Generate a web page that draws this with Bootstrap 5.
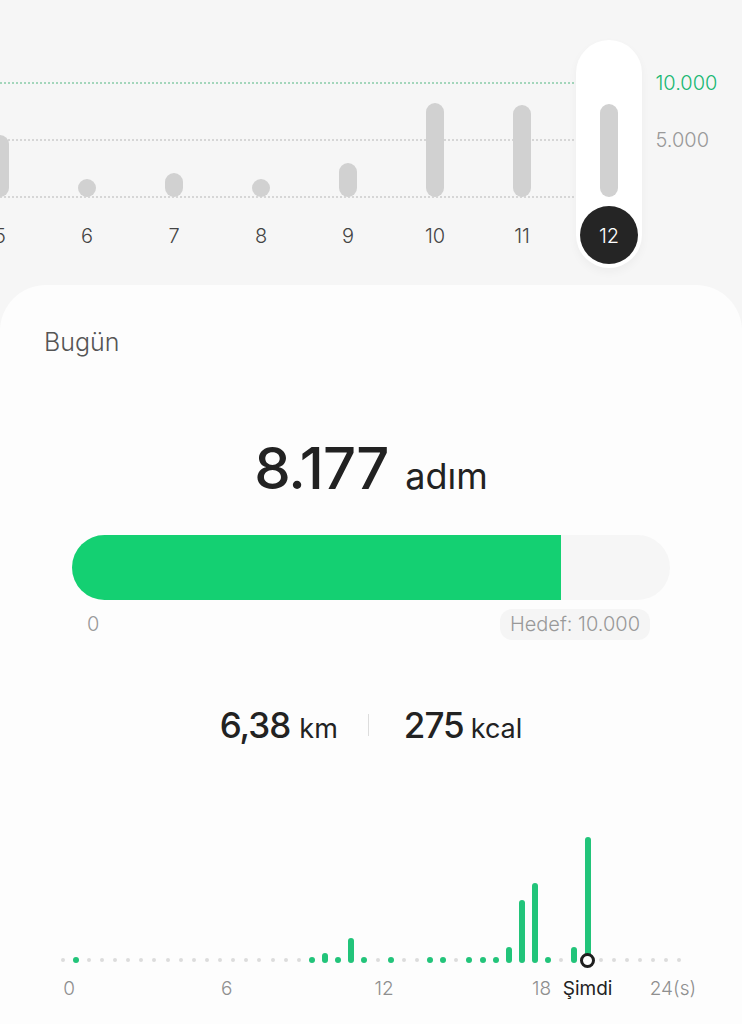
<!doctype html>
<html lang="tr">
  <head>
    <meta charset="utf-8">
    <meta name="viewport" content="width=device-width, initial-scale=1">
    <title>Adımlar</title>
    <link href="https://cdn.jsdelivr.net/npm/bootstrap@5.3.0/dist/css/bootstrap.min.css" rel="stylesheet">
    <style>
      body {
        background: #f6f6f6;
        font-family: "Inter", "Liberation Sans", sans-serif;
        color: #222;
        overflow: hidden;
      }
      .week-chart { height: 285px; padding-top: 40px; margin-left: -43.5px; }
      .week-plot { height: 228px; }
      .grid-line { position: absolute; left: 0; right: 20px; border-top: 2px dotted #d6d6d6; }
      .grid-line.goal { top: 42px; border-top-color: #a3d6bb; }
      .grid-line.mid { top: 99px; }
      .grid-line.base { top: 156px; }
      .day-col { width: 87px; height: 228px; position: relative; }
      .day-pill { width: 66px; height: 228px; border-radius: 33px; }
      .day-pill.active { background: #fff; box-shadow: 0 4px 10px rgba(0, 0, 0, .04); }
      .bar-area { height: 157px; }
      .day-bar { width: 18px; background: #d1d1d1; border-radius: 9px; }
      .day-label { width: 58px; height: 58px; margin-top: 9px; padding-top: 1px; font-size: 20px; color: #444; font-weight: 300; }
      .day-label.active { background: #252525; color: #fff; }
      .axis-col { margin-left: 3px; padding-top: 31px; font-size: 20px; line-height: 24px; font-weight: 300; color: #999; }
      .axis-col .goal-text { color: #19b873; margin-bottom: 33px; }
      .today-card { background: #fdfdfd; border-radius: 46px 46px 0 0; height: 739px; padding-top: 40px; }
      .today-title { padding-left: 44px; font-size: 25px; line-height: 34px; color: #555; font-weight: 300; }
      .step-row { margin-top: 74px; height: 70px; }
      .step-num { font-size: 58px; font-weight: 500; line-height: 70px; letter-spacing: -1px; }
      .step-unit { font-size: 36px; margin-left: 17px; line-height: 70px; font-weight: 400; }
      .step-track { margin: 32px 72px 0; height: 65px; background: #f6f6f6; border-radius: 33px; overflow: hidden; }
      .step-fill { height: 65px; background: #14d072; }
      .step-scale { margin: 9px 92px 0 87px; height: 31px; font-size: 20px; line-height: 31px; font-weight: 300; color: #999; }
      .goal-pill { background: #f5f5f5; border-radius: 12px; padding: 0 10px; }
      .stat-row { margin-top: 63px; height: 44px; }
      .stat-num { font-size: 35px; font-weight: 500; letter-spacing: -1px; }
      .stat-unit { font-size: 27px; margin-left: 7px; }
      .stat-unit.wide-gap { margin-left: 9px; }
      .stat-sep { width: 1px; height: 22px; background: #ddd; margin: 0 35px 0 30px; }
      .hour-grid { display: grid; grid-template-columns: repeat(48, 13.13px); margin-left: 56px; }
      .hour-bars { margin-top: 71px; height: 145px; align-items: end; position: relative; }
      .hour-slot { display: flex; justify-content: center; position: relative; }
      .hour-tick { background: #dcdcdc; width: 4px; height: 4px; border-radius: 50%; margin-bottom: 1px; }
      .hour-tick.on { background: #22c47a; width: 6px; border-radius: 3px; margin-bottom: 0; }
      .now-ring { position: absolute; left: 50%; bottom: -5px; width: 15px; height: 15px; margin-left: -7.5px; background: #fff; border: 3.5px solid #1f1f1f; border-radius: 50%; }
      .hour-labels { margin-top: 13px; font-size: 19px; line-height: 26px; font-weight: 300; color: #8f8f8f; }
      .hour-labels span { display: flex; justify-content: center; white-space: nowrap; }
      .hour-labels .at-0 { grid-column: 1 / span 2; }
      .hour-labels .at-6 { grid-column: 13 / span 2; }
      .hour-labels .at-12 { grid-column: 25 / span 2; }
      .hour-labels .at-18 { grid-column: 37 / span 2; }
      .hour-labels .at-now { grid-column: 39 / span 5; color: #222; font-weight: 400; }
      .hour-labels .at-24 { grid-column: 47 / span 2; }
    </style>
  </head>
  <body>
    <div class="week-chart d-flex">
      <div class="week-plot d-flex position-relative">
        <div class="grid-line goal"></div>
        <div class="grid-line mid"></div>
        <div class="grid-line base"></div>
        <div class="day-col d-flex justify-content-center"><div class="day-pill d-flex flex-column align-items-center"><div class="bar-area d-flex align-items-end"><div class="day-bar" style="height: 62px"></div></div><div class="day-label d-flex align-items-center justify-content-center">5</div></div></div>
        <div class="day-col d-flex justify-content-center"><div class="day-pill d-flex flex-column align-items-center"><div class="bar-area d-flex align-items-end"><div class="day-bar" style="height: 18px"></div></div><div class="day-label d-flex align-items-center justify-content-center">6</div></div></div>
        <div class="day-col d-flex justify-content-center"><div class="day-pill d-flex flex-column align-items-center"><div class="bar-area d-flex align-items-end"><div class="day-bar" style="height: 24px"></div></div><div class="day-label d-flex align-items-center justify-content-center">7</div></div></div>
        <div class="day-col d-flex justify-content-center"><div class="day-pill d-flex flex-column align-items-center"><div class="bar-area d-flex align-items-end"><div class="day-bar" style="height: 18px"></div></div><div class="day-label d-flex align-items-center justify-content-center">8</div></div></div>
        <div class="day-col d-flex justify-content-center"><div class="day-pill d-flex flex-column align-items-center"><div class="bar-area d-flex align-items-end"><div class="day-bar" style="height: 34px"></div></div><div class="day-label d-flex align-items-center justify-content-center">9</div></div></div>
        <div class="day-col d-flex justify-content-center"><div class="day-pill d-flex flex-column align-items-center"><div class="bar-area d-flex align-items-end"><div class="day-bar" style="height: 94px"></div></div><div class="day-label d-flex align-items-center justify-content-center">10</div></div></div>
        <div class="day-col d-flex justify-content-center"><div class="day-pill d-flex flex-column align-items-center"><div class="bar-area d-flex align-items-end"><div class="day-bar" style="height: 92px"></div></div><div class="day-label d-flex align-items-center justify-content-center">11</div></div></div>
        <div class="day-col d-flex justify-content-center"><div class="day-pill active d-flex flex-column align-items-center"><div class="bar-area d-flex align-items-end"><div class="day-bar" style="height: 93px"></div></div><div class="day-label active rounded-circle d-flex align-items-center justify-content-center">12</div></div></div>
      </div>
      <div class="axis-col">
        <div class="goal-text">10.000</div>
        <div>5.000</div>
      </div>
    </div>

    <div class="today-card">
      <div class="today-title">Bugün</div>

      <div class="step-row d-flex justify-content-center align-items-baseline">
        <span class="step-num">8.177</span>
        <span class="step-unit">adım</span>
      </div>

      <div class="step-track">
        <div class="step-fill" style="width: 81.77%"></div>
      </div>
      <div class="step-scale d-flex justify-content-between">
        <span>0</span>
        <span class="goal-pill">Hedef: 10.000</span>
      </div>

      <div class="stat-row d-flex justify-content-center align-items-center">
        <div><span class="stat-num">6,38</span><span class="stat-unit wide-gap">km</span></div>
        <div class="stat-sep"></div>
        <div><span class="stat-num">275</span><span class="stat-unit">kcal</span></div>
      </div>

      <div class="hour-grid hour-bars" id="hourBars"></div>
      <div class="hour-grid hour-labels">
        <span class="at-0">0</span>
        <span class="at-6">6</span>
        <span class="at-12">12</span>
        <span class="at-18">18</span>
        <span class="at-now">Şimdi</span>
        <span class="at-24">24(s)</span>
      </div>
    </div>

    <script src="https://cdn.jsdelivr.net/npm/bootstrap@5.3.0/dist/js/bootstrap.bundle.min.js"></script>
    <script>
      // half hour slots, value = bar height in px
      const steps = { 1: 6, 19: 6, 20: 10, 21: 6, 22: 25, 23: 6, 25: 6, 28: 6, 29: 6, 31: 6, 32: 6, 33: 6, 34: 16, 35: 63, 36: 80, 37: 6, 39: 16, 40: 126 };
      const hourBars = document.getElementById('hourBars');
      for (let i = 0; i < 48; i++) {
        const slot = document.createElement('div');
        slot.className = 'hour-slot';
        const tick = document.createElement('div');
        tick.className = steps[i] ? 'hour-tick on' : 'hour-tick';
        if (steps[i]) tick.style.height = steps[i] + 'px';
        slot.appendChild(tick);
        if (i === 40) {
          const ring = document.createElement('div');
          ring.className = 'now-ring';
          slot.appendChild(ring);
        }
        hourBars.appendChild(slot);
      }
    </script>
  </body>
</html>
